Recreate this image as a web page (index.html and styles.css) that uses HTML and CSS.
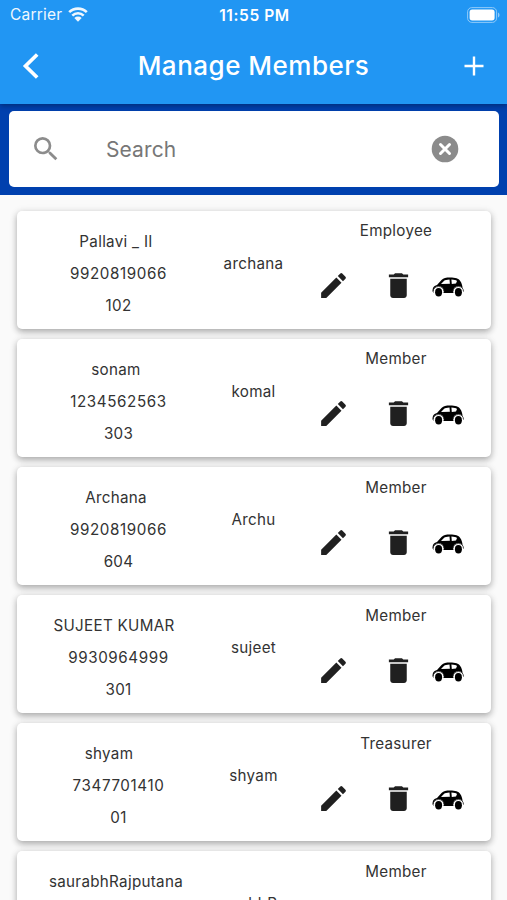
FILE: index.html
```html
<!DOCTYPE html>
<html lang="en">
<head>
<meta charset="utf-8">
<title>Manage Members</title>
<link rel="stylesheet" href="styles.css">
</head>
<body>
<svg class="sprite" aria-hidden="true">
  <symbol id="edit" viewBox="0 0 24 24"><path d="M3 17.25V21h3.75L17.81 9.94l-3.75-3.75L3 17.25zM20.71 7.04a1 1 0 0 0 0-1.41l-2.34-2.34a1 1 0 0 0-1.41 0l-1.83 1.83 3.75 3.75 1.83-1.83z"/></symbol>
  <symbol id="trash" viewBox="0 0 24 24"><path d="M6 19c0 1.1.9 2 2 2h8c1.1 0 2-.9 2-2V7H6v12zM19 4h-3.5l-1-1h-5l-1 1H5v2h14V4z"/></symbol>
  <symbol id="car" viewBox="0 0 32 20">
    <path d="M.8 14.8C.2 11.500 1.200 9 5 8l4.500-5C11.500 1.200 14 .6 18 .6c5.500 0 8.500 1 10.200 3.400 1.500 2 2.200 4.500 2.400 7.500l.8 3-1.600 1.500H2z"/>
    <path class="car-light" d="M9 7l2.900-2.900c1.200-1 3-1.400 5.600-1.500l.4 4.200zM19.400 2.600c2.800.1 4.500.5 5.600 1.500l-1 2.500-4.200.3z"/>
    <circle class="car-light" cx="6.600" cy="14.300" r="5.200"/><circle class="car-light" cx="26.400" cy="14.300" r="5.200"/>
    <ellipse cx="6.600" cy="15.300" rx="3.500" ry="4.200"/><ellipse cx="26.400" cy="15.300" rx="3.500" ry="4.200"/>
    <path class="car-line" d="M1 14.500c.3-3.200 2.500-5 5.600-5s5.300 1.800 5.500 5M20.900 14.500c.2-3.200 2.400-5 5.500-5s5 1.800 5.100 5"/>
  </symbol>
</svg>

<header class="app-bar">
  <div class="status">
    <div class="carrier">Carrier
      <svg class="wifi" viewBox="0 0 20 15"><path d="M1.200 5.200a12.500 12.500 0 0 1 17.600 0M4.300 8.600a8.200 8.200 0 0 1 11.400 0"/><path class="wifi-dot" d="M6.300 11a5.400 5.400 0 0 1 7.400 0L10 14.700z"/></svg>
    </div>
    <div class="time">11:55 PM</div>
    <svg class="battery" viewBox="0 0 33 16"><rect class="battery-case" x=".6" y=".6" width="29" height="14.800" rx="4.200"/><rect class="battery-fill" x="2.600" y="2.600" width="25" height="10.800" rx="2.600"/><path class="battery-tip" d="M31 5.500c2 .8 2 4.200 0 5z"/></svg>
  </div>
  <div class="toolbar">
    <svg class="back" viewBox="0 0 18 28"><path d="M15.200 2.500L3.500 14l11.700 11.500"/></svg>
    <h1>Manage Members</h1>
    <svg class="add" viewBox="0 0 20 20"><path d="M10 .5v19M.5 10h19"/></svg>
  </div>
</header>

<section class="search-band">
  <div class="search">
    <svg class="search-icon" viewBox="0 0 24 24"><path d="M15.500 14h-.79l-.28-.27A6.470 6.470 0 0 0 16 9.500 6.500 6.500 0 1 0 9.500 16c1.610 0 3.090-.59 4.230-1.570l.27.28v.79l5 4.990L20.490 19l-4.990-5zm-6 0a4.500 4.500 0 1 1 0-9 4.500 4.500 0 0 1 0 9z"/></svg>
    <span class="placeholder">Search</span>
    <svg class="clear" viewBox="0 0 28 28"><circle cx="14" cy="14" r="13.300"/><path d="M9.500 9.500l9 9M18.500 9.500l-9 9"/></svg>
  </div>
</section>

<main class="list">
  <article class="card">
    <div class="who"><span class="name">Pallavi _ II</span><span class="number">9920819066</span><span>102</span></div>
    <div class="user">archana</div>
    <div class="side"><span>Employee</span><div class="actions"><svg><use href="#edit"/></svg><svg><use href="#trash"/></svg><svg class="car"><use href="#car"/></svg></div></div>
  </article>
  <article class="card">
    <div class="who"><span class="name">sonam</span><span class="number">1234562563</span><span>303</span></div>
    <div class="user">komal</div>
    <div class="side"><span>Member</span><div class="actions"><svg><use href="#edit"/></svg><svg><use href="#trash"/></svg><svg class="car"><use href="#car"/></svg></div></div>
  </article>
  <article class="card">
    <div class="who"><span class="name">Archana</span><span class="number">9920819066</span><span>604</span></div>
    <div class="user">Archu</div>
    <div class="side"><span>Member</span><div class="actions"><svg><use href="#edit"/></svg><svg><use href="#trash"/></svg><svg class="car"><use href="#car"/></svg></div></div>
  </article>
  <article class="card">
    <div class="who"><span class="name one-space">SUJEET KUMAR</span><span class="number">9930964999</span><span>301</span></div>
    <div class="user">sujeet</div>
    <div class="side"><span>Member</span><div class="actions"><svg><use href="#edit"/></svg><svg><use href="#trash"/></svg><svg class="car"><use href="#car"/></svg></div></div>
  </article>
  <article class="card">
    <div class="who"><span class="name wide-space">shyam</span><span class="number">7347701410</span><span>01</span></div>
    <div class="user">shyam</div>
    <div class="side"><span>Treasurer</span><div class="actions"><svg><use href="#edit"/></svg><svg><use href="#trash"/></svg><svg class="car"><use href="#car"/></svg></div></div>
  </article>
  <article class="card">
    <div class="who"><span class="name">saurabhRajputana</span></div>
    <div class="user last">saurabhRa</div>
    <div class="side"><span>Member</span></div>
  </article>
</main>
</body>
</html>
```

FILE: styles.css
```css
* { box-sizing: border-box; }
body {
  margin: 0;
  height: 900px;
  display: flex;
  flex-direction: column;
  overflow: hidden;
  background: #fafafa;
  color: #333;
  font-family: Inter, "Liberation Sans", sans-serif;
  font-size: 15.200px;
}
svg { display: block; flex: none; }
.sprite { display: none; }

.app-bar {
  position: relative;
  flex: none;
  height: 103.500px;
  background: #2196f3;
  color: #fff;
  box-shadow: 0 2px 5px rgba(0, 0, 0, .3);
}
.status {
  display: grid;
  grid-template-columns: 1fr auto 1fr;
  align-items: center;
  height: 29px;
  padding: 0 7px 0 10px;
}
.carrier { display: flex; align-items: center; gap: 6px; font-size: 15.500px; letter-spacing: .2px; opacity: .93; }
.wifi { width: 20px; height: 15px; fill: none; stroke: #fff; stroke-width: 2.600; }
.wifi-dot { fill: #fff; stroke: none; }
.time { padding-top: 1px; font-size: 15.500px; font-weight: 600; letter-spacing: .6px; margin-right: 1px; }
.battery { width: 33px; height: 16px; justify-self: end; }
.battery-case { fill: none; stroke: #90caf9; stroke-width: 1; }
.battery-fill { fill: #fff; }
.battery-tip { fill: #90caf9; }

.toolbar {
  display: grid;
  grid-template-columns: 60px 1fr 60px;
  align-items: center;
  height: 73px;
}
.back { width: 18px; height: 28px; margin-left: 22px; fill: none; stroke: #fff; stroke-width: 3.700; }
h1 { margin: 0; text-align: center; font-size: 26px; font-weight: 500; letter-spacing: .5px; }
.add { width: 20px; height: 20px; margin-left: 17px; fill: none; stroke: #fff; stroke-width: 2.400; }

.search-band { flex: none; height: 91.500px; padding: 7.500px 8px 8px 9px; background: #0040ae; }
.search {
  display: flex;
  align-items: center;
  height: 76px;
  padding: 0 40px 0 21px;
  border-radius: 5px;
  background: #fff;
}
.search-icon { width: 32px; height: 32px; fill: #8c8c8c; }
.placeholder { flex: 1; margin-left: 44px; color: #777; font-size: 21px; letter-spacing: .1px; }
.clear { width: 28px; height: 28px; fill: #8b8b8b; stroke: #fff; stroke-width: 3; stroke-linecap: round; }
.clear circle { stroke: none; }

.list {
  display: flex;
  flex: 1;
  min-height: 0;
  flex-direction: column;
  gap: 10.500px;
  overflow: hidden;
  padding: 16px 16px 0 17px;
}
.card {
  display: grid;
  grid-template-columns: 203px 67px 190px;
  flex: none;
  height: 117.600px;
  justify-content: space-between;
  border-radius: 5px;
  background: #fff;
  box-shadow: 0 3px 6px rgba(0, 0, 0, .26), 0 1px 9px rgba(0, 0, 0, .11);
  letter-spacing: .3px;
}
.who { display: flex; flex-direction: column; align-items: center; padding-top: 14.600px; line-height: 32.200px; }
.name { padding-right: 5px; }
.name.one-space { padding-right: 9px; }
.name.wide-space { padding-right: 19px; }
.number { letter-spacing: .6px; }
.user { margin: 0 7px 0 -7px; padding-top: 42.700px; line-height: 20px; text-align: center; white-space: nowrap; }
.user.last { margin: 0 20px 0 -20px; }
.side { display: flex; flex-direction: column; align-items: center; padding-top: 10.400px; line-height: 20px; }
.actions { display: flex; align-items: center; align-self: stretch; height: 33px; margin-top: 28px; padding-left: 16px; fill: #202020; }
.actions svg { width: 33px; height: 33px; }
.actions svg + svg { margin-left: 32px; }
.actions svg.car { width: 32px; height: 20px; margin: 3px 0 0 16.500px; fill: #000; }
.car-light { fill: #fff; }
.car-line { fill: none; stroke: #222; stroke-width: .8; }
```
